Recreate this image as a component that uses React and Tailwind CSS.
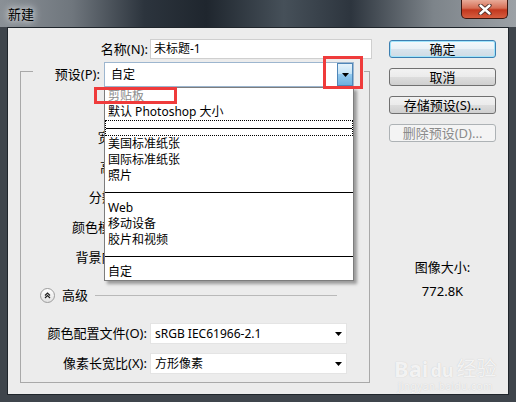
import React from 'react';

const Arrow = () => (
    <svg width="7" height="4" viewBox="0 0 7 4">
        <path d="M0 0h7L3.5 4z" fill="#000" />
    </svg>
);

const Btn = ({ children, kind }) => {
    const look =
        kind === 'primary'
            ? 'border-[#3c7fb1] shadow-[inset_0_0_0_1px_#9fe4fb] bg-[linear-gradient(#f3f9fc,#e9f1f6_50%,#d9e5ee_50%,#cfdbe4)]'
            : kind === 'disabled'
            ? 'border-[#adb2b5] bg-[#f4f4f4] text-[#8b8b8b]'
            : 'border-[#707070] bg-[linear-gradient(#f2f2f2,#ebebeb_50%,#dddddd_50%,#cfcfcf)]';
    return (
        <div className={`flex h-[18px] w-[107px] items-center justify-center rounded-[3px] border text-[13px] leading-none ${look}`}>
            {children}
        </div>
    );
};

const Row = ({ label, className, children }) => (
    <div className={`flex items-center ${className}`}>
        <span className="w-[126px] text-right text-[13px] leading-none">{label}</span>
        <div className="ml-[3px] flex">{children}</div>
    </div>
);

const Combo = ({ value }) => (
    <div className="flex h-[21px] w-[197px] items-center justify-between border border-[#e4e4e4] bg-white pl-[4px] pr-[4px] text-[12px]">
        <span>{value}</span>
        <Arrow />
    </div>
);

const items = [
    { t: '剪贴板', gray: true },
    { t: '默认 Photoshop 大小' },
    { sep: true, focus: true },
    { t: '美国标准纸张' },
    { t: '国际标准纸张' },
    { t: '照片' },
    { sep: true },
    { t: 'Web' },
    { t: '移动设备' },
    { t: '胶片和视频' },
    { sep: true },
    { t: '自定' },
];

export default function App() {
    return (
        <div className="relative flex h-[402px] w-[516px] flex-col overflow-hidden bg-[#3f454c] text-black [font-family:'Noto_Sans','Noto_Sans_CJK_SC',sans-serif]">
            {/* title bar */}
            <div className="flex h-[27px] shrink-0 items-start justify-between bg-[linear-gradient(90deg,#8a9096_0%,#6f767d_14%,#2c343d_28%,#1f262e_40%,#465059_55%,#2d353e_68%,#7d848a_84%,#9ca1a6_100%)]">
                <span className="ml-[8px] mt-[6px] text-[13px] leading-[16px] [text-shadow:0_0_6px_#e4e7ea,0_0_10px_#e4e7ea]">新建</span>
                <div className="mr-[8px] flex h-[19px] w-[47px] items-center justify-center rounded-b-[5px] border border-t-0 border-[#3d1710] bg-[linear-gradient(#e8ab99,#d66e55_45%,#c2381e_55%,#d65d3f)]">
                    <svg width="14" height="11" viewBox="0 0 14 11">
                        <path d="M2.5 1.5l9 8M11.5 1.5l-9 8" stroke="#4a2a24" strokeWidth="4.2" strokeLinecap="round" />
                        <path d="M2.5 1.5l9 8M11.5 1.5l-9 8" stroke="#fff" strokeWidth="2.4" strokeLinecap="round" />
                    </svg>
                </div>
            </div>

            {/* client area */}
            <div className="mx-[7px] flex h-[368px] shrink-0 border border-[#1f252b] bg-[#ececec]">
                {/* left column */}
                <div className="flex w-[365px] flex-col">
                    <div className="mt-[11px] flex h-[20px] items-center">
                        <span className="w-[140px] text-right text-[13px] leading-none">名称(N):</span>
                        <div className="ml-[2px] flex h-[20px] w-[222px] items-center border border-[#cfcfcf] bg-white px-[3px] text-[12px]">
                            未标题-1
                        </div>
                    </div>

                    <fieldset className="-mt-[4px] ml-[12px] w-[350px] border border-[#a9a9a9] pb-[8px]">
                        <legend className="ml-[12px] pr-[10px] pt-[7px]">
                            <div className="flex items-center">
                                <span className="w-[67px] text-right text-[13px] leading-none">预设(P):</span>
                                <div className="relative ml-[4px]">
                                    <div className="flex h-[25px] w-[250px] border border-[#9db6cf] bg-white">
                                        <span className="flex flex-1 items-center pl-[6px] text-[12px]">自定</span>
                                        <div className="flex w-[16px] items-center justify-center border border-[#4f86b8] bg-[linear-gradient(#e6f3fb,#c2e2f6_50%,#93c9ee_50%,#6db1e0)]">
                                            <Arrow />
                                        </div>
                                    </div>

                                    {/* open list */}
                                    <div className="absolute left-0 top-[25px] z-20 w-[250px] border border-[#7d7d7d] bg-white shadow-[3px_3px_3px_rgba(0,0,0,0.35)]">
                                        {items.map((it, i) =>
                                            it.sep ? (
                                                <div
                                                    key={i}
                                                    className={`flex h-[16px] items-center ${it.focus ? 'border border-dotted border-black' : ''}`}
                                                >
                                                    <div className="h-px w-full bg-black" />
                                                </div>
                                            ) : (
                                                <div
                                                    key={i}
                                                    className={`h-[16px] pl-[3px] text-[12px] leading-[16px] ${it.gray ? 'text-[#8c8c8c]' : ''}`}
                                                >
                                                    {it.t}
                                                </div>
                                            )
                                        )}
                                    </div>

                                    {/* annotation boxes */}
                                    <div className="absolute left-[219px] top-[-6px] z-30 h-[33px] w-[40px] border-[3px] border-[#ef3b3b]" />
                                    <div className="absolute left-[-10px] top-[25px] z-30 h-[17px] w-[83px] border-[3px] border-[#ef3b3b]" />
                                </div>
                            </div>
                        </legend>

                        <Row label="宽度(W):" className="mt-[39px] h-[22px]">
                            <div className="h-[20px] w-[120px] border border-[#cfcfcf] bg-white" />
                        </Row>
                        <Row label="高度(H):" className="mt-[8px] h-[22px]">
                            <div className="h-[20px] w-[120px] border border-[#cfcfcf] bg-white" />
                        </Row>
                        <Row label="分辨率(R):" className="mt-[8px] h-[22px]">
                            <div className="h-[20px] w-[120px] border border-[#cfcfcf] bg-white" />
                        </Row>
                        <Row label="颜色模式(M):" className="mt-[8px] h-[22px]">
                            <div className="h-[20px] w-[120px] border border-[#cfcfcf] bg-white" />
                        </Row>
                        <Row label="背景内容(C):" className="mt-[8px] h-[22px]">
                            <div className="h-[20px] w-[197px] border border-[#cfcfcf] bg-white" />
                        </Row>

                        <div className="mt-[19px] flex h-[16px] items-center">
                            <div className="ml-[19px] flex h-[15px] w-[15px] items-center justify-center rounded-full border border-[#9c9c9c] bg-[linear-gradient(#ffffff,#e2e2e2)]">
                                <svg width="7" height="7" viewBox="0 0 7 7">
                                    <path d="M1 3.5L3.5 1L6 3.5M1 6L3.5 3.5L6 6" fill="none" stroke="#222" strokeWidth="1.2" />
                                </svg>
                            </div>
                            <span className="ml-[7px] text-[13px] leading-none">高级</span>
                            <div className="ml-[7px] mr-[32px] h-px flex-1 bg-[#b9b9b9]" />
                        </div>

                        <Row label="颜色配置文件(O):" className="mt-[20px] h-[21px]">
                            <Combo value="sRGB IEC61966-2.1" />
                        </Row>
                        <Row label="像素长宽比(X):" className="mt-[9px] h-[21px]">
                            <Combo value="方形像素" />
                        </Row>
                    </fieldset>
                </div>

                {/* right column */}
                <div className="ml-[16px] flex w-[107px] flex-col">
                    <div className="mt-[12px] flex flex-col gap-[10px]">
                        <Btn kind="primary">确定</Btn>
                        <Btn>取消</Btn>
                        <Btn>存储预设(S)...</Btn>
                        <Btn kind="disabled">删除预设(D)...</Btn>
                    </div>
                    <div className="mt-[117px] text-center text-[13px] leading-[16px]">图像大小:</div>
                    <div className="mt-[8px] text-center text-[13px] leading-[16px]">772.8K</div>
                </div>
            </div>

            {/* watermark */}
            <div className="absolute left-[394px] top-[357px] flex flex-col items-center text-white/80 [text-shadow:0_0_1px_#bdbdbd]">
                <div className="flex items-end font-bold leading-none">
                    <span className="text-[22px]">Bai</span>
                    <span className="ml-[2px] text-[18px]">du</span>
                    <span className="ml-[3px] text-[20px] font-normal">经验</span>
                </div>
                <span className="mt-[2px] text-[10px] leading-none tracking-[0.5px]">jingyan.baidu.com</span>
            </div>
        </div>
    );
}
